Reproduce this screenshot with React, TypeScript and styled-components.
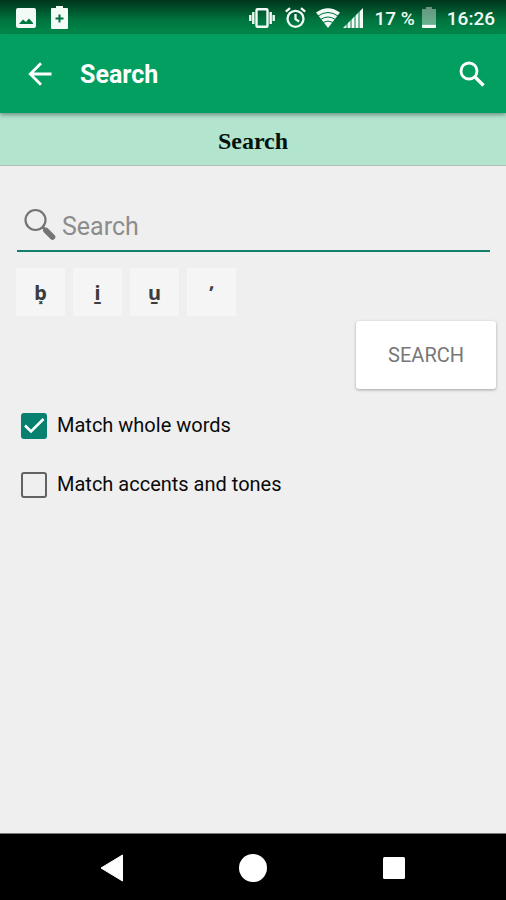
import React, { useState } from "react";
import styled, { createGlobalStyle } from "styled-components";

const GlobalStyle = createGlobalStyle`
  *, *::before, *::after { box-sizing: border-box; }
  body {
    margin: 0;
    background: #efefef;
    font-family: Roboto, "Liberation Sans", sans-serif;
  }
  button { font-family: inherit; border: 0; padding: 0; cursor: pointer; }
  svg { display: block; flex: none; }
`;

const Screen = styled.div`
  display: flex;
  flex-direction: column;
  min-height: 100vh;
`;

const StatusBar = styled.div`
  display: flex;
  align-items: center;
  justify-content: space-between;
  height: 34px;
  padding: 1px 11px 0 16px;
  background: linear-gradient(#00361b 0, #00532c 10px, #00743e 20px, #00894b 34px);
  color: #f2fbf6;
  font-size: 19px;
  font-weight: 500;
  line-height: 24px;
`;

const StatusGroup = styled.div<{ $gap: number }>`
  display: flex;
  align-items: center;
  gap: ${(p) => p.$gap}px;
`;

const StatusText = styled.span`
  padding-top: 2px;
  white-space: nowrap;
`;

const AppBar = styled.header`
  display: flex;
  align-items: center;
  height: 79px;
  padding: 0 18px 0 24px;
  background: #029f61;
  color: #fff;
  box-shadow: 0 2px 4px rgba(0, 0, 0, 0.35);
  z-index: 1;
`;

const AppTitle = styled.h1`
  flex: 1;
  margin: 0 0 0 24px;
  padding-top: 3px;
  font-size: 25px;
  font-weight: 700;
  line-height: 32px;
`;

const IconButton = styled.button`
  display: grid;
  place-items: center;
  width: 32px;
  height: 32px;
  background: none;
  color: inherit;
`;

const Banner = styled.h2`
  margin: 0;
  padding: 14px 0 10px;
  background: #b2e4ce;
  border-bottom: 1px solid #b4bdb8;
  color: #04120c;
  font-family: "Liberation Serif", serif;
  font-size: 24px;
  font-weight: 700;
  line-height: 28px;
  text-align: center;
`;

const Form = styled.form`
  flex: 1;
  display: flex;
  flex-direction: column;
  padding: 32px 10px 24px 16px;
`;

const SearchField = styled.label`
  display: flex;
  align-items: center;
  gap: 6px;
  height: 54px;
  margin: 0 6px 0 1px;
  padding: 0 7px;
  border-bottom: 2px solid #14806b;
`;

const SearchInput = styled.input`
  flex: 1;
  min-width: 0;
  padding: 5px 0 0;
  border: 0;
  outline: 0;
  background: transparent;
  color: #222;
  font-family: inherit;
  font-size: 25px;
  line-height: 32px;
  &::placeholder { color: #8c8c8c; opacity: 1; }
`;

const KeyRow = styled.div`
  display: flex;
  gap: 8px;
  margin-top: 16px;
`;

const Key = styled.button`
  width: 49px;
  height: 48px;
  background: #f5f5f5;
  color: #3c3c3c;
  font-family: "Noto Sans", "DejaVu Sans", sans-serif;
  font-size: 20px;
  font-weight: 700;
`;

const SubmitButton = styled.button`
  align-self: flex-end;
  margin-top: 5px;
  padding: 22px 32px;
  border-radius: 3px;
  background: #fff;
  color: #777;
  font-size: 20px;
  line-height: 24px;
  box-shadow: 0 1px 3px rgba(0, 0, 0, 0.32);
`;

const Options = styled.div`
  display: flex;
  flex-direction: column;
  gap: 32px;
  margin-top: 23px;
  padding-left: 5px;
`;

const OptionLabel = styled.label`
  display: flex;
  align-items: center;
  gap: 10px;
  color: #0a0a0a;
  font-size: 20px;
  line-height: 27px;
`;

const CheckBox = styled.span`
  display: grid;
  width: 26px;
  height: 26px;
`;

const CheckInput = styled.input`
  appearance: none;
  grid-area: 1 / 1;
  width: 26px;
  height: 26px;
  margin: 0;
  border: 2px solid #626262;
  border-radius: 3px;
  &:checked { border-color: #07806f; background: #07806f; }
`;

const Tick = styled.svg`
  grid-area: 1 / 1;
  z-index: 1;
  pointer-events: none;
`;

const NavBar = styled.nav`
  display: grid;
  grid-template-columns: repeat(3, 1fr);
  align-items: center;
  height: 67px;
  padding: 2px 42px 0;
  border-top: 1px solid #777;
  background: #000;
`;

const NavButton = styled.button`
  display: grid;
  place-items: center;
  height: 48px;
  background: none;
`;

const PictureIcon = () => (
  <svg width="20" height="20" viewBox="0 0 20 20" fill="currentColor" aria-hidden="true">
    <path fillRule="evenodd" d="M2 0h16a2 2 0 0 1 2 2v16a2 2 0 0 1-2 2H2a2 2 0 0 1-2-2V2a2 2 0 0 1 2-2zM3 16h14v-1l-4-4.500-3 3.500-3-2.500L3 16z" />
  </svg>
);

const BatteryPlusIcon = () => (
  <svg width="17" height="23" viewBox="0 0 17 23" fill="currentColor" aria-hidden="true">
    <path fillRule="evenodd" d="M5 0h7v2h4a1 1 0 0 1 1 1v19a1 1 0 0 1-1 1H1a1 1 0 0 1-1-1V3a1 1 0 0 1 1-1h4zM7.500 8.500v3h-3v2h3v3h2v-3h3v-2h-3v-3z" />
  </svg>
);

const VibrateIcon = () => (
  <svg width="26" height="20" viewBox="0 0 26 20" fill="none" stroke="currentColor" aria-hidden="true">
    <rect x="7.500" y="1.200" width="11" height="17.600" rx="1" strokeWidth="2.400" />
    <path d="M4.300 4v12M21.700 4v12" strokeWidth="2.400" />
    <path d="M1.300 7v6M24.700 7v6" strokeWidth="2.400" />
  </svg>
);

const AlarmIcon = () => (
  <svg width="21" height="21" viewBox="0 0 21 21" fill="none" stroke="currentColor" strokeWidth="2.300" aria-hidden="true">
    <circle cx="10.500" cy="11.800" r="8" />
    <path d="M10.500 7v5.200l3.600 2.200M.8 4.600 5 1.100M16 1.100l4.200 3.500" />
  </svg>
);

const WifiIcon = () => (
  <svg width="24" height="20" viewBox="0 0 24 20" aria-hidden="true">
    <path fill="currentColor" d="M0 4.500Q12-4 24 4.500L12 20z" />
    <path fill="none" stroke="#006e3a" strokeWidth="1" d="M2 8q10-7 20 0M4.500 11.500q7.500-5 15 0M7 14.500q5-3 10 0" />
  </svg>
);

const SignalIcon = () => (
  <svg width="20" height="20" viewBox="0 0 20 20" aria-hidden="true">
    <path fill="currentColor" d="M0 20 20 0v20z" />
    <path stroke="#007a42" strokeWidth="1" d="M4 15v5M8 11v9M12 7v13M16 3v17" />
  </svg>
);

const BatteryIcon = () => (
  <svg width="14" height="21" viewBox="0 0 14 21" fill="currentColor" aria-hidden="true">
    <path fillOpacity=".42" d="M4 0h6v2h4v15H0V2h4z" />
    <path d="M0 17.500h14V20a1 1 0 0 1-1 1H1a1 1 0 0 1-1-1z" />
  </svg>
);

const BackArrowIcon = () => (
  <svg width="24" height="24" viewBox="0 0 24 24" fill="none" stroke="currentColor" strokeWidth="2.800" aria-hidden="true">
    <path d="M23.500 12H2.500M13 1.300 2.300 12 13 22.700" />
  </svg>
);

const MagnifierIcon = () => (
  <svg width="26" height="26" viewBox="0 0 26 26" fill="none" stroke="currentColor" aria-hidden="true">
    <circle cx="10" cy="10" r="8" strokeWidth="2.800" />
    <path d="m16 16 8.500 8.500" strokeWidth="3.400" />
  </svg>
);

const FieldMagnifierIcon = () => (
  <svg width="32" height="32" viewBox="0 0 32 32" fill="none" stroke="#747474" aria-hidden="true">
    <circle cx="11.500" cy="12" r="10" strokeWidth="2.200" />
    <path d="m18.500 19 4 4" strokeWidth="2.600" />
    <path d="m22 22.500 6.500 6.500" strokeWidth="5.600" strokeLinecap="round" />
  </svg>
);

const keys = ["b\u0353", "i\u0331", "u\u0331", "\u02BC"];

type OptionProps = {
  label: string;
  checked: boolean;
  onChange: (value: boolean) => void;
};

const Option = ({ label, checked, onChange }: OptionProps) => (
  <OptionLabel>
    <CheckBox>
      <CheckInput type="checkbox" checked={checked} onChange={(e) => onChange(e.target.checked)} />
      {checked && (
        <Tick width="26" height="26" viewBox="0 0 26 26" fill="none" stroke="#fff" strokeWidth="2.600" aria-hidden="true">
          <path d="m4 12.500 6 6L22.500 6" />
        </Tick>
      )}
    </CheckBox>
    {label}
  </OptionLabel>
);

export default function App() {
  const [query, setQuery] = useState("");
  const [wholeWords, setWholeWords] = useState(true);
  const [accents, setAccents] = useState(false);

  return (
    <Screen>
      <GlobalStyle />
      <StatusBar>
        <StatusGroup $gap={15}>
          <PictureIcon />
          <BatteryPlusIcon />
        </StatusGroup>
        <StatusGroup $gap={11}>
          <StatusGroup $gap={10}>
            <VibrateIcon />
            <AlarmIcon />
            <StatusGroup $gap={3}>
              <WifiIcon />
              <SignalIcon />
            </StatusGroup>
          </StatusGroup>
          <StatusGroup $gap={7}>
            <StatusText>17 %</StatusText>
            <BatteryIcon />
          </StatusGroup>
          <StatusText>16:26</StatusText>
        </StatusGroup>
      </StatusBar>
      <AppBar>
        <IconButton type="button" aria-label="Back">
          <BackArrowIcon />
        </IconButton>
        <AppTitle>Search</AppTitle>
        <IconButton type="button" aria-label="Open search">
          <MagnifierIcon />
        </IconButton>
      </AppBar>
      <Banner>Search</Banner>
      <Form onSubmit={(e) => e.preventDefault()}>
        <SearchField>
          <FieldMagnifierIcon />
          <SearchInput
            type="text"
            aria-label="Search"
            placeholder="Search"
            value={query}
            onChange={(e) => setQuery(e.target.value)}
          />
        </SearchField>
        <KeyRow>
          {keys.map((key) => (
            <Key key={key} type="button" onClick={() => setQuery(query + key)}>
              {key}
            </Key>
          ))}
        </KeyRow>
        <SubmitButton type="submit">SEARCH</SubmitButton>
        <Options>
          <Option label="Match whole words" checked={wholeWords} onChange={setWholeWords} />
          <Option label="Match accents and tones" checked={accents} onChange={setAccents} />
        </Options>
      </Form>
      <NavBar>
        <NavButton type="button" aria-label="Back">
          <svg width="24" height="28" viewBox="0 0 24 28" aria-hidden="true">
            <path fill="#fff" stroke="#fff" strokeLinejoin="round" d="M1 14 22.500 1v26z" />
          </svg>
        </NavButton>
        <NavButton type="button" aria-label="Home">
          <svg width="28" height="28" viewBox="0 0 28 28" aria-hidden="true">
            <circle fill="#fff" cx="14" cy="14" r="14" />
          </svg>
        </NavButton>
        <NavButton type="button" aria-label="Recent apps">
          <svg width="22" height="22" viewBox="0 0 22 22" aria-hidden="true">
            <rect fill="#fff" width="22" height="22" rx="1.500" />
          </svg>
        </NavButton>
      </NavBar>
    </Screen>
  );
}
